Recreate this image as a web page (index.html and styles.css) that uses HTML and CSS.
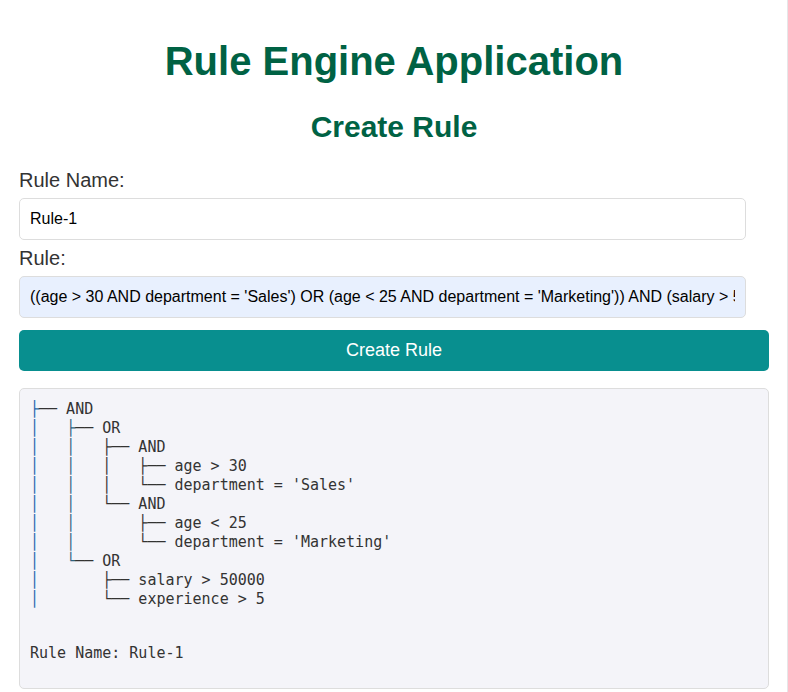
FILE: index.html
```html
<!DOCTYPE html>
<html lang="en">
<head>
<meta charset="utf-8">
<meta name="viewport" content="width=device-width, initial-scale=1">
<title>Rule Engine Application</title>
<link rel="stylesheet" href="styles.css">
</head>
<body>
<main class="container">
<h1>Rule Engine Application</h1>
<h2>Create Rule</h2>
<form class="rule-form">
<label for="rule-name">Rule Name:</label>
<input type="text" id="rule-name" value="Rule-1">
<label for="rule">Rule:</label>
<input type="text" id="rule" class="filled" value="((age &gt; 30 AND department = 'Sales') OR (age &lt; 25 AND department = 'Marketing')) AND (salary &gt; 50000 OR experience &gt; 5)">
<button type="button">Create Rule</button>
</form>
<section class="output">
<pre class="tree"><span class="root">├</span>── AND
<span class="root">│</span>   <span class="sub">├</span>── OR
<span class="root">│</span>   <span class="sub">│</span>   ├── AND
<span class="root">│</span>   <span class="sub">│</span>   │   ├── age &gt; 30
<span class="root">│</span>   <span class="sub">│</span>   │   └── department = 'Sales'
<span class="root">│</span>   <span class="sub">│</span>   └── AND
<span class="root">│</span>   <span class="sub">│</span>       ├── age &lt; 25
<span class="root">│</span>   <span class="sub">│</span>       └── department = 'Marketing'
<span class="root">│</span>   <span class="sub">└</span>── OR
<span class="root">│</span>       ├── salary &gt; 50000
<span class="root">│</span>       └── experience &gt; 5

</pre>
<p>Rule Name: Rule-1</p>
</section>
</main>
</body>
</html>
```

FILE: styles.css
```css
* {
  box-sizing: border-box;
}

body {
  margin: 0;
  background: #fff;
  color: #333;
  font-family: Arial, "Liberation Sans", sans-serif;
  font-size: 20px;
  line-height: 24px;
}

.container {
  min-height: 100vh;
  padding: 37px 18px 3px 19px;
  border-right: 1px solid #e6e6e8;
}

h1,
h2 {
  color: #006244;
  text-align: center;
}

h1 {
  margin: 0 0 24px;
  font-size: 40px;
  line-height: 48px;
}

h2 {
  margin: 0 0 23px;
  font-size: 30px;
  line-height: 36px;
}

.rule-form {
  display: flex;
  flex-direction: column;
  align-items: flex-start;
  gap: 6px;
}

input {
  width: calc(100% - 23px);
  height: 42px;
  padding: 10px;
  border: 1px solid #ddd;
  border-radius: 5px;
  background: #fff;
  color: #000;
  font: 16px Arial, "Liberation Sans", sans-serif;
}

input.filled {
  background: #e8f0fe;
}

button {
  width: 100%;
  height: 41px;
  margin-top: 6px;
  padding: 0 10px;
  border: 0;
  border-radius: 5px;
  background: #088f8f;
  color: #fff;
  font: 18px Arial, "Liberation Sans", sans-serif;
  cursor: pointer;
}

.output {
  margin-top: 17px;
  padding: 11px 10px 9px;
  border: 1px solid #ddd;
  border-radius: 5px;
  background: #f4f4f9;
  font-family: "DejaVu Sans Mono", monospace;
  font-size: 15px;
  line-height: 19px;
}

.tree {
  margin: 0;
  font: inherit;
}

.root {
  color: #1f68ae;
}

.sub {
  color: #2f6282;
}

.output p {
  margin: 16px 0;
}
```
